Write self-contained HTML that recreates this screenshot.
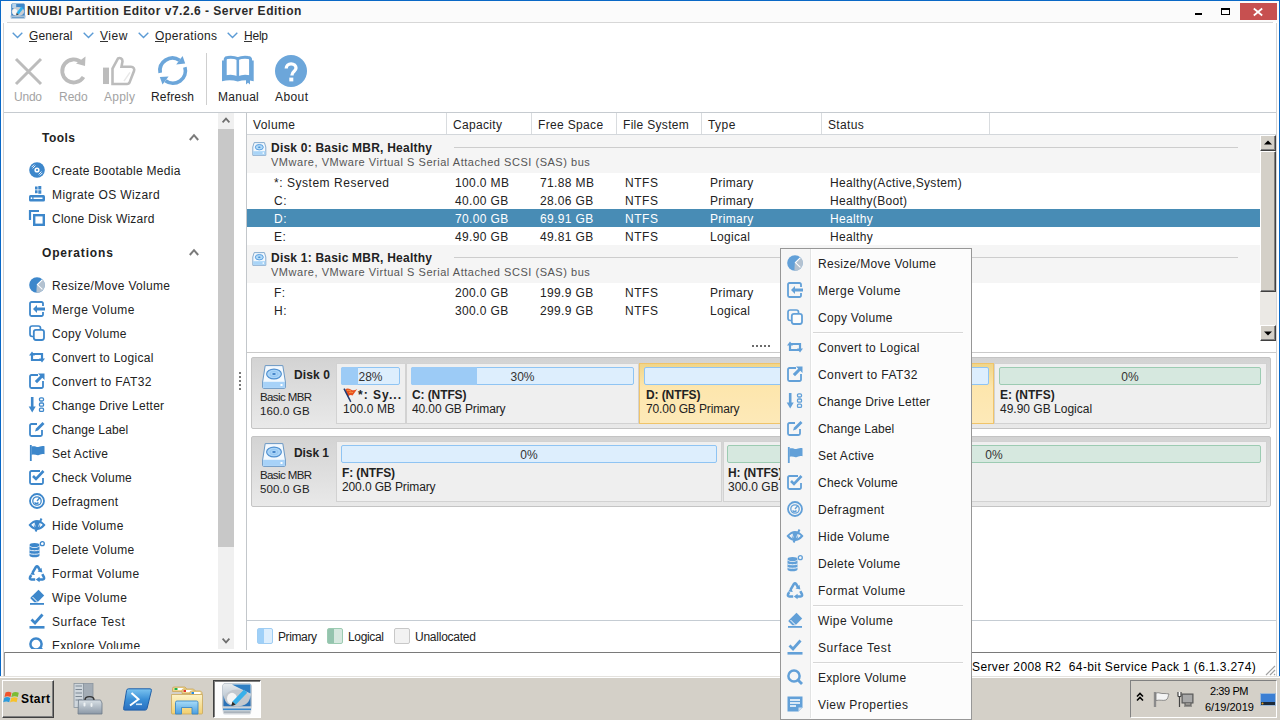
<!DOCTYPE html>
<html><head><meta charset="utf-8"><style>html,body{margin:0;padding:0;width:1280px;height:720px;overflow:hidden;background:#fff;position:relative}
.t{position:absolute;white-space:pre;line-height:1;font-family:"Liberation Sans",sans-serif}
svg{position:absolute;overflow:visible}
.clip{position:absolute;overflow:hidden}
</style></head><body>
<div style="position:absolute;left:0px;top:0px;width:1280px;height:720px;background:#ffffff;"></div>
<div style="position:absolute;left:1px;top:1px;width:1278px;height:21px;background:#fbfbfb;"></div>
<div style="position:absolute;left:0px;top:0px;width:1280px;height:1px;background:#0a68c6;"></div>
<div style="position:absolute;left:0px;top:0px;width:1px;height:676px;background:#0a68c6;"></div>
<div style="position:absolute;left:1279px;top:0px;width:1px;height:676px;background:#0a68c6;"></div>
<div style="position:absolute;left:7px;top:22px;width:1266px;height:1px;background:#d7d7d7;"></div>
<div style="position:absolute;left:3px;top:23px;width:1px;height:653px;background:#d4d4d4;"></div>
<div style="position:absolute;left:1276px;top:23px;width:1px;height:653px;background:#d4d4d4;"></div>
<svg style="left:10px;top:3px" width="16" height="16" viewBox="0 0 16 16"><path d="M2 0.5h12l0.8 1v11.5H1.2V1.5z" fill="#3f86c8"/><path d="M2.2 1h4v4h-4z" fill="#b9d3ea"/><ellipse cx="8" cy="8.6" rx="6.2" ry="4.6" fill="#c9cdd3"/><ellipse cx="4.8" cy="9" rx="2.5" ry="2.9" fill="#f6f6f6"/><path d="M6.6 9.8L11.4 3.6 13.4 5.4 8.6 11.4z" fill="#2cb0ee"/><path d="M6.6 9.8L8.6 11.4 6.2 12.4z" fill="#3a3a3a"/><path d="M0.3 12.6h15.4l-0.6 3.2H0.9z" fill="#a6c0d8"/><rect x="2" y="14" width="12" height="1" fill="#6d9ec9"/></svg>
<div class="t" style="left:27px;top:5px;font-size:12px;font-weight:700;color:#2b2b2b;letter-spacing:0.51px;">NIUBI Partition Editor v7.2.6 - Server Edition</div>
<div style="position:absolute;left:1195px;top:13px;width:7px;height:2px;background:#000;"></div>
<div style="position:absolute;left:1221px;top:8px;width:7px;height:4px;border:1px solid #000;border-top-width:2px"></div>
<div style="position:absolute;left:1240px;top:3px;width:37px;height:17px;background:#c75050;"></div>
<svg style="left:1253px;top:8px" width="10" height="8" viewBox="0 0 10 8"><path d="M0.8 0.5L9.2 7.5M9.2 0.5L0.8 7.5" stroke="#fff" stroke-width="1.7"/></svg>
<svg style="left:12px;top:32px" width="11" height="7" viewBox="0 0 11 7"><path d="M0.7 0.7L5.5 5.5 10.3 0.7" fill="none" stroke="#5b9bd5" stroke-width="1.4"/></svg>
<div class="t" style="left:29px;top:30px;font-size:12px;color:#222;letter-spacing:0.13px;">General</div>
<svg style="left:83px;top:32px" width="11" height="7" viewBox="0 0 11 7"><path d="M0.7 0.7L5.5 5.5 10.3 0.7" fill="none" stroke="#5b9bd5" stroke-width="1.4"/></svg>
<div class="t" style="left:100px;top:30px;font-size:12px;color:#222;letter-spacing:0.57px;">View</div>
<svg style="left:138px;top:32px" width="11" height="7" viewBox="0 0 11 7"><path d="M0.7 0.7L5.5 5.5 10.3 0.7" fill="none" stroke="#5b9bd5" stroke-width="1.4"/></svg>
<div class="t" style="left:155px;top:30px;font-size:12px;color:#222;letter-spacing:0.37px;">Operations</div>
<svg style="left:227px;top:32px" width="11" height="7" viewBox="0 0 11 7"><path d="M0.7 0.7L5.5 5.5 10.3 0.7" fill="none" stroke="#5b9bd5" stroke-width="1.4"/></svg>
<div class="t" style="left:244px;top:30px;font-size:12px;color:#222;letter-spacing:-0.23px;">Help</div>
<div style="position:absolute;left:29px;top:41px;width:8px;height:1px;background:#333;"></div>
<div style="position:absolute;left:100px;top:41px;width:8px;height:1px;background:#333;"></div>
<div style="position:absolute;left:155px;top:41px;width:9px;height:1px;background:#333;"></div>
<div style="position:absolute;left:244px;top:41px;width:8px;height:1px;background:#333;"></div>
<svg style="left:14px;top:57px" width="30" height="30" viewBox="0 0 30 30"><path d="M2 2L27 27M27 2L2 27" stroke="#bcbcbc" stroke-width="3"/></svg>
<svg style="left:59px;top:55px" width="28" height="30" viewBox="0 0 28 30"><path d="M22.5 7.5A11.5 11.5 0 1 0 24.5 22" fill="none" stroke="#bcbcbc" stroke-width="3.8"/><path d="M17 8.5L26.5 1.5 26 11z" fill="#bcbcbc"/></svg>
<svg style="left:103px;top:56px" width="33" height="29" viewBox="0 0 33 30" preserveAspectRatio="none"><rect x="0" y="12" width="6" height="17" fill="#bcbcbc"/><path d="M9.5 13L15 2.5c2-1 4.5 0 4.5 3L18.5 11H28c2.5 0 3.8 2.5 3 4.5L26.5 27.5c-0.5 1-1.2 1.5-2.3 1.5H9.5z" fill="none" stroke="#bcbcbc" stroke-width="2.6"/><path d="M21 26L27 17" stroke="#e8e8e8" stroke-width="1.5"/></svg>
<svg style="left:154px;top:52px" width="40" height="38" viewBox="0 0 40 38"><path d="M6.19 20.9A12.5 12.5 0 0 1 25.5 8.2" fill="none" stroke="#6ca6da" stroke-width="3.7"/><path d="M22.2 12.6L31.2 11.6 28.6 4z" fill="#6ca6da"/><path d="M30.9 15.2A12.5 12.5 0 0 1 11.5 28.8" fill="none" stroke="#6ca6da" stroke-width="3.7"/><path d="M5.8 25.1L14.6 24.6 8.5 32.6z" fill="#6ca6da"/></svg>
<div style="position:absolute;left:206px;top:53px;width:1px;height:52px;background:#cfcfcf;"></div>
<svg style="left:218px;top:52px" width="40" height="38" viewBox="0 0 40 38"><path d="M7.2 25V7.8Q7.2 5.6 9.5 5.4Q15.5 4.6 19.8 6.6Q24.3 4.6 30.3 5.4Q32.6 5.6 32.6 7.8V25" fill="none" stroke="#6ca6da" stroke-width="3"/><path d="M19.8 6.5V26" stroke="#6ca6da" stroke-width="2.6"/><path d="M4 8.5h3.5v14.8Q14 21.6 19.8 24.2Q25.6 21.6 32.2 23.3V8.5h3.5V29.2Q27 27 19.8 29.6Q12.6 27 4 29.2z" fill="#6ca6da"/><path d="M28 27.5h4v5l-2-1.8-2 1.8z" fill="#6ca6da"/></svg>
<svg style="left:275px;top:55px" width="32" height="32" viewBox="0 0 32 32"><circle cx="16" cy="16" r="16" fill="#6ca6da"/><path d="M11.2 13.6c0-2.9 2.1-4.8 4.9-4.8s4.9 1.9 4.9 4.3c0 3.4-4 3.6-4 6.8v0.6" fill="none" stroke="#fff" stroke-width="3.3"/><rect x="14.3" y="22.6" width="4" height="3.8" fill="#fff"/></svg>
<div class="t" style="left:14px;top:91px;font-size:12px;color:#a3a3a3;letter-spacing:-0.23px;">Undo</div>
<div class="t" style="left:59px;top:91px;font-size:12px;color:#a3a3a3;">Redo</div>
<div class="t" style="left:104px;top:91px;font-size:12px;color:#a3a3a3;letter-spacing:0.24px;">Apply</div>
<div class="t" style="left:151px;top:91px;font-size:12px;color:#222;letter-spacing:0.16px;">Refresh</div>
<div class="t" style="left:218px;top:91px;font-size:12px;color:#222;letter-spacing:0.28px;">Manual</div>
<div class="t" style="left:275px;top:91px;font-size:12px;color:#222;letter-spacing:0.41px;">About</div>
<div style="position:absolute;left:4px;top:112px;width:1272px;height:1px;background:#c6cbd0;"></div>
<div class="clip" style="left:4px;top:113px;width:214px;height:536px">
<div class="t" style="left:38px;top:19px;font-size:12px;font-weight:700;color:#222;letter-spacing:0.47px;">Tools</div>
<svg style="left:185px;top:20px" width="10" height="8" viewBox="0 0 10 8"><path d="M0.8 7L5 2.2 9.2 7" fill="none" stroke="#7a7a7a" stroke-width="2"/></svg>
<div class="t" style="left:38px;top:134px;font-size:12px;font-weight:700;color:#222;letter-spacing:0.83px;">Operations</div>
<svg style="left:185px;top:135px" width="10" height="8" viewBox="0 0 10 8"><path d="M0.8 7L5 2.2 9.2 7" fill="none" stroke="#7a7a7a" stroke-width="2"/></svg>
<svg style="left:25px;top:49px" width="16" height="16" viewBox="0 0 16 16"><circle cx="8" cy="8" r="7.8" fill="#3d87cb"/><circle cx="8" cy="8" r="2.6" fill="#fff"/><circle cx="8" cy="8" r="1.1" fill="#3d87cb"/><path d="M2.6 5.2L5.2 2.6M3.6 6.4L6.4 3.6M13.4 10.8L10.8 13.4M12.4 9.6L9.6 12.4" stroke="#fff" stroke-width="0.9"/></svg>
<div class="t" style="left:48px;top:52px;font-size:12px;color:#222;letter-spacing:0.28px;">Create Bootable Media</div>
<svg style="left:25px;top:73px" width="16" height="16" viewBox="0 0 16 16"><path d="M6 0.5h2.6v3h-2.6zM9.3 0h3v3.5h-3zM6 4.2h2.6v3h-2.6zM9.3 4.2h3v3.5h-3z" fill="#3d87cb"/><rect x="0" y="9" width="16" height="6.5" rx="1.5" fill="#3d87cb"/><rect x="4.5" y="11.5" width="9" height="1.5" fill="#fff"/><circle cx="2.5" cy="12.2" r="0.9" fill="#fff"/></svg>
<div class="t" style="left:48px;top:76px;font-size:12px;color:#222;letter-spacing:0.39px;">Migrate OS Wizard</div>
<svg style="left:25px;top:97px" width="16" height="16" viewBox="0 0 16 16"><path d="M1 10V1h9" fill="none" stroke="#3d87cb" stroke-width="2.2"/><rect x="5.2" y="5.2" width="9.6" height="9.6" fill="none" stroke="#3d87cb" stroke-width="2.4"/></svg>
<div class="t" style="left:48px;top:100px;font-size:12px;color:#222;letter-spacing:0.23px;">Clone Disk Wizard</div>
<svg style="left:25px;top:164px" width="16" height="16" viewBox="0 0 16 16"><circle cx="8" cy="8" r="7.8" fill="#3d87cb"/><path d="M7.8 7.8L13.6 2.6A7.8 7.8 0 0 1 7.4 15.8Z" fill="#b4c2d0"/><path d="M13.4 2.6L8.4 7.6 13.4 12.4" fill="none" stroke="#fff" stroke-width="1.1"/></svg>
<div class="t" style="left:48px;top:167px;font-size:12px;color:#222;letter-spacing:0.31px;">Resize/Move Volume</div>
<svg style="left:25px;top:188px" width="16" height="16" viewBox="0 0 16 16"><path d="M14 5V2.5a1.5 1.5 0 0 0-1.5-1.5h-10A1.5 1.5 0 0 0 1 2.5v11A1.5 1.5 0 0 0 2.5 15h10a1.5 1.5 0 0 0 1.5-1.5V11" fill="none" stroke="#3d87cb" stroke-width="1.8"/><path d="M4 8l4-4v2.5h8v3H8V12z" fill="#3d87cb"/></svg>
<div class="t" style="left:48px;top:191px;font-size:12px;color:#222;letter-spacing:0.46px;">Merge Volume</div>
<svg style="left:25px;top:212px" width="16" height="16" viewBox="0 0 16 16"><rect x="1" y="1" width="10.5" height="10.5" rx="2.2" fill="none" stroke="#3d87cb" stroke-width="1.7"/><rect x="4.8" y="4.8" width="10.2" height="10.2" rx="2.2" fill="#fcfcfc" stroke="#3d87cb" stroke-width="1.8"/></svg>
<div class="t" style="left:48px;top:215px;font-size:12px;color:#222;letter-spacing:0.30px;">Copy Volume</div>
<svg style="left:25px;top:236px" width="16" height="16" viewBox="0 0 16 16"><path d="M3 5.5v5.5h9.5" fill="none" stroke="#3d87cb" stroke-width="2.2"/><path d="M13 10.5V5H3.5" fill="none" stroke="#3d87cb" stroke-width="2.2"/><path d="M0 6.5l3-4 3 4zM10 9.5l3 4 3-4z" fill="#3d87cb"/></svg>
<div class="t" style="left:48px;top:239px;font-size:12px;color:#222;letter-spacing:0.27px;">Convert to Logical</div>
<svg style="left:25px;top:260px" width="16" height="16" viewBox="0 0 16 16"><path d="M9 2H2.5A1.5 1.5 0 0 0 1 3.5v10A1.5 1.5 0 0 0 2.5 15h10a1.5 1.5 0 0 0 1.5-1.5V8" fill="none" stroke="#3d87cb" stroke-width="1.8"/><path d="M9 0.5h6.5V7L13.3 4.8 8 10.2 5.8 8 11.2 2.7z" fill="#3d87cb"/></svg>
<div class="t" style="left:48px;top:263px;font-size:12px;color:#222;letter-spacing:0.42px;">Convert to FAT32</div>
<svg style="left:25px;top:284px" width="16" height="16" viewBox="0 0 16 16"><path d="M3.2 0v11" stroke="#3d87cb" stroke-width="2.6"/><path d="M-0.3 9.5h7L3.2 15.5z" fill="#3d87cb"/><rect x="10.5" y="0.8" width="4" height="3.2" rx="1.2" fill="none" stroke="#3d87cb" stroke-width="1.3"/><rect x="10.5" y="6" width="4" height="3.2" rx="1" fill="none" stroke="#3d87cb" stroke-width="1.3"/><rect x="10.5" y="11.2" width="4" height="3.2" rx="1" fill="none" stroke="#3d87cb" stroke-width="1.3"/></svg>
<div class="t" style="left:48px;top:287px;font-size:12px;color:#222;letter-spacing:0.26px;">Change Drive Letter</div>
<svg style="left:25px;top:308px" width="16" height="16" viewBox="0 0 16 16"><path d="M8 3H2.5A1.5 1.5 0 0 0 1 4.5v9A1.5 1.5 0 0 0 2.5 15h9a1.5 1.5 0 0 0 1.5-1.5V9" fill="none" stroke="#3d87cb" stroke-width="1.8"/><path d="M6 10.5l1-3L13.5 1 15.5 3 9 9.5z" fill="#3d87cb"/></svg>
<div class="t" style="left:48px;top:311px;font-size:12px;color:#222;letter-spacing:0.14px;">Change Label</div>
<svg style="left:25px;top:332px" width="16" height="16" viewBox="0 0 16 16"><path d="M1.8 0v16" stroke="#3d87cb" stroke-width="1.8"/><path d="M2.5 1.5c3-1.2 5 1 7.5 0.2s4-0.8 5.5-0.5v8c-1.5-0.3-3 0-5.5 0.8s-4.5-1.2-7.5 0z" fill="#3d87cb"/></svg>
<div class="t" style="left:48px;top:335px;font-size:12px;color:#222;letter-spacing:0.29px;">Set Active</div>
<svg style="left:25px;top:356px" width="16" height="16" viewBox="0 0 16 16"><path d="M11 2H2.5A1.5 1.5 0 0 0 1 3.5v10A1.5 1.5 0 0 0 2.5 15h10a1.5 1.5 0 0 0 1.5-1.5V9" fill="none" stroke="#3d87cb" stroke-width="1.8"/><path d="M4 7l3 3 7.5-8" fill="none" stroke="#3d87cb" stroke-width="2.6"/></svg>
<div class="t" style="left:48px;top:359px;font-size:12px;color:#222;letter-spacing:0.22px;">Check Volume</div>
<svg style="left:25px;top:380px" width="16" height="16" viewBox="0 0 16 16"><circle cx="8" cy="8" r="7" fill="none" stroke="#3d87cb" stroke-width="1.8"/><circle cx="8" cy="8" r="4.2" fill="none" stroke="#3d87cb" stroke-width="1.3"/><path d="M8 8L11 4.5M5.5 9.5a2.5 2.5 0 0 0 4 0" fill="none" stroke="#3d87cb" stroke-width="1.3"/></svg>
<div class="t" style="left:48px;top:383px;font-size:12px;color:#222;letter-spacing:0.38px;">Defragment</div>
<svg style="left:25px;top:404px" width="16" height="16" viewBox="0 0 16 16"><path d="M0.8 8Q8 0 15.2 8Q8 16 0.8 8z" fill="none" stroke="#3d87cb" stroke-width="1.9"/><ellipse cx="8" cy="8" rx="3.2" ry="3.4" fill="#3d87cb"/><path d="M12.5 1.5L6.6 14.5" stroke="#3d87cb" stroke-width="2"/><path d="M5.2 6L6.2 9.5M10.8 6.2L9.6 9.6" stroke="#fff" stroke-width="0.8"/></svg>
<div class="t" style="left:48px;top:407px;font-size:12px;color:#222;letter-spacing:0.33px;">Hide Volume</div>
<svg style="left:25px;top:428px" width="16" height="16" viewBox="0 0 16 16"><ellipse cx="5.5" cy="4" rx="5" ry="2" fill="#3d87cb"/><path d="M0.5 5v9.5c0 1.2 2.2 1.8 5 1.8s5-0.6 5-1.8V5c0 1.2-2.2 1.8-5 1.8S0.5 6.2 0.5 5z" fill="#3d87cb"/><path d="M0.5 9c1.5 1 8.5 1 10 0M0.5 12.5c1.5 1 8.5 1 10 0" fill="none" stroke="#fff" stroke-width="0.9"/><circle cx="13.3" cy="2.7" r="2" fill="none" stroke="#3d87cb" stroke-width="1.3"/></svg>
<div class="t" style="left:48px;top:431px;font-size:12px;color:#222;letter-spacing:0.35px;">Delete Volume</div>
<svg style="left:25px;top:452px" width="16" height="16" viewBox="0 0 16 16"><path d="M3.6 7.6L7 1.8Q8 0.6 9 1.8L10.9 5.2M13.3 9.2L15 12.3Q15.6 14.3 13.6 14.5H9.8M6.2 14.5H2.4Q0.4 14.3 1 12.3L2.2 10.1" fill="none" stroke="#3d87cb" stroke-width="2.5"/><path d="M8.6 6.6L13.4 7.4 12.4 2.8zM10.6 11.8V17.2L6.8 14.5zM1.2 9.4L5.8 10 4 5.6z" fill="#3d87cb"/></svg>
<div class="t" style="left:48px;top:455px;font-size:12px;color:#222;letter-spacing:0.49px;">Format Volume</div>
<svg style="left:25px;top:476px" width="16" height="16" viewBox="0 0 16 16"><path d="M9.5 0.8L15.2 6.5 8.5 13.2H5.3L1.8 9.7a1 1 0 0 1 0-1.4z" fill="#3d87cb"/><path d="M3.5 8L8.5 13" stroke="#fff" stroke-width="1"/><path d="M6 8L11 3" stroke="#fff" stroke-width="0" /><rect x="1" y="14" width="14" height="1.8" fill="#3d87cb"/></svg>
<div class="t" style="left:48px;top:479px;font-size:12px;color:#222;letter-spacing:0.42px;">Wipe Volume</div>
<svg style="left:25px;top:500px" width="16" height="16" viewBox="0 0 16 16"><path d="M2.5 6.5L6 10 13.5 1.5" fill="none" stroke="#3d87cb" stroke-width="2.8"/><rect x="0.5" y="13" width="15" height="2.6" fill="#3d87cb"/></svg>
<div class="t" style="left:48px;top:503px;font-size:12px;color:#222;letter-spacing:0.57px;">Surface Test</div>
<svg style="left:25px;top:524px" width="16" height="16" viewBox="0 0 16 16"><circle cx="7" cy="7" r="5.6" fill="none" stroke="#3d87cb" stroke-width="2.5"/><path d="M10.5 10.5L15 15" stroke="#3d87cb" stroke-width="2.8"/></svg>
<div class="t" style="left:48px;top:527px;font-size:12px;color:#222;letter-spacing:0.31px;">Explore Volume</div>
</div>
<div style="position:absolute;left:218px;top:113px;width:16px;height:16px;background:#f0f0f0;"></div>
<svg style="left:222px;top:117px" width="8" height="6" viewBox="0 0 8 6"><path d="M0.6 5.4L4 1.6 7.4 5.4" fill="none" stroke="#6e6e6e" stroke-width="1.7"/></svg>
<div style="position:absolute;left:218px;top:129px;width:16px;height:418px;background:#c8c8c8;"></div>
<div style="position:absolute;left:218px;top:547px;width:16px;height:102px;background:#f0f0f0;"></div>
<svg style="left:222px;top:638px" width="8" height="6" viewBox="0 0 8 6"><path d="M0.6 0.6L4 4.4 7.4 0.6" fill="none" stroke="#6e6e6e" stroke-width="1.7"/></svg>
<div style="position:absolute;left:239px;top:372px;width:2px;height:2px;background:#7a7a7a;"></div>
<div style="position:absolute;left:239px;top:376px;width:2px;height:2px;background:#7a7a7a;"></div>
<div style="position:absolute;left:239px;top:380px;width:2px;height:2px;background:#7a7a7a;"></div>
<div style="position:absolute;left:239px;top:384px;width:2px;height:2px;background:#7a7a7a;"></div>
<div style="position:absolute;left:239px;top:388px;width:2px;height:2px;background:#7a7a7a;"></div>
<div style="position:absolute;left:246px;top:113px;width:1px;height:537px;background:#c3c7cb;"></div>
<div style="position:absolute;left:247px;top:134px;width:1029px;height:1px;background:#d3d7db;"></div>
<div style="position:absolute;left:446px;top:113px;width:1px;height:21px;background:#d9dcdf;"></div>
<div style="position:absolute;left:531px;top:113px;width:1px;height:21px;background:#d9dcdf;"></div>
<div style="position:absolute;left:616px;top:113px;width:1px;height:21px;background:#d9dcdf;"></div>
<div style="position:absolute;left:701px;top:113px;width:1px;height:21px;background:#d9dcdf;"></div>
<div style="position:absolute;left:821px;top:113px;width:1px;height:21px;background:#d9dcdf;"></div>
<div style="position:absolute;left:989px;top:113px;width:1px;height:21px;background:#d9dcdf;"></div>
<div class="t" style="left:253px;top:119px;font-size:12px;color:#222;letter-spacing:0.40px;">Volume</div>
<div class="t" style="left:453px;top:119px;font-size:12px;color:#222;letter-spacing:0.33px;">Capacity</div>
<div class="t" style="left:538px;top:119px;font-size:12px;color:#222;letter-spacing:0.34px;">Free Space</div>
<div class="t" style="left:623px;top:119px;font-size:12px;color:#222;letter-spacing:0.31px;">File System</div>
<div class="t" style="left:708px;top:119px;font-size:12px;color:#222;letter-spacing:0.43px;">Type</div>
<div class="t" style="left:828px;top:119px;font-size:12px;color:#222;letter-spacing:0.34px;">Status</div>
<div style="position:absolute;left:247px;top:135px;width:1013px;height:38px;background:#f5f5f5;"></div>
<svg style="left:252px;top:142px" width="15" height="14" viewBox="0 0 15 14"><path d="M2.2 0.6h10.2l1.4 4.4v8.3H0.8V5z" fill="#f2f8fd" stroke="#7aa3c8" stroke-width="0.9"/><rect x="1.2" y="9.2" width="12.2" height="3.7" fill="#a9d4f7"/><ellipse cx="7.3" cy="5.2" rx="4" ry="2.7" fill="#b2dbf8" stroke="#5b9fe0" stroke-width="1"/><ellipse cx="7.3" cy="5.2" rx="1.3" ry="0.7" fill="#4a8fd0"/><rect x="10.6" y="10.4" width="1.4" height="1.4" fill="#fff"/></svg>
<div class="t" style="left:271px;top:142px;font-size:12px;font-weight:700;color:#222;letter-spacing:0.22px;">Disk 0: Basic MBR, Healthy</div>
<div style="position:absolute;left:454px;top:147px;width:784px;height:1px;background:#cdcdcd;"></div>
<div class="t" style="left:271px;top:157px;font-size:11px;color:#555;letter-spacing:0.53px;">VMware, VMware Virtual S Serial Attached SCSI (SAS) bus</div>
<div style="position:absolute;left:247px;top:245px;width:1013px;height:38px;background:#f5f5f5;"></div>
<svg style="left:252px;top:252px" width="15" height="14" viewBox="0 0 15 14"><path d="M2.2 0.6h10.2l1.4 4.4v8.3H0.8V5z" fill="#f2f8fd" stroke="#7aa3c8" stroke-width="0.9"/><rect x="1.2" y="9.2" width="12.2" height="3.7" fill="#a9d4f7"/><ellipse cx="7.3" cy="5.2" rx="4" ry="2.7" fill="#b2dbf8" stroke="#5b9fe0" stroke-width="1"/><ellipse cx="7.3" cy="5.2" rx="1.3" ry="0.7" fill="#4a8fd0"/><rect x="10.6" y="10.4" width="1.4" height="1.4" fill="#fff"/></svg>
<div class="t" style="left:271px;top:252px;font-size:12px;font-weight:700;color:#222;letter-spacing:0.22px;">Disk 1: Basic MBR, Healthy</div>
<div style="position:absolute;left:454px;top:257px;width:784px;height:1px;background:#cdcdcd;"></div>
<div class="t" style="left:271px;top:267px;font-size:11px;color:#555;letter-spacing:0.53px;">VMware, VMware Virtual S Serial Attached SCSI (SAS) bus</div>
<div style="position:absolute;left:247px;top:209px;width:1013px;height:18px;background:#488cb5;"></div>
<div class="t" style="left:274px;top:177px;font-size:12px;color:#222;letter-spacing:0.53px;">*: System Reserved</div>
<div class="t" style="left:455px;top:177px;font-size:12px;color:#222;letter-spacing:0.37px;">100.0 MB</div>
<div class="t" style="left:540px;top:177px;font-size:12px;color:#222;letter-spacing:0.37px;">71.88 MB</div>
<div class="t" style="left:625px;top:177px;font-size:12px;color:#222;letter-spacing:0.52px;">NTFS</div>
<div class="t" style="left:710px;top:177px;font-size:12px;color:#222;letter-spacing:0.34px;">Primary</div>
<div class="t" style="left:830px;top:177px;font-size:12px;color:#222;letter-spacing:0.33px;">Healthy(Active,System)</div>
<div class="t" style="left:274px;top:195px;font-size:12px;color:#222;letter-spacing:0.60px;">C:</div>
<div class="t" style="left:455px;top:195px;font-size:12px;color:#222;letter-spacing:0.36px;">40.00 GB</div>
<div class="t" style="left:540px;top:195px;font-size:12px;color:#222;letter-spacing:0.36px;">28.06 GB</div>
<div class="t" style="left:625px;top:195px;font-size:12px;color:#222;letter-spacing:0.52px;">NTFS</div>
<div class="t" style="left:710px;top:195px;font-size:12px;color:#222;letter-spacing:0.34px;">Primary</div>
<div class="t" style="left:830px;top:195px;font-size:12px;color:#222;letter-spacing:0.31px;">Healthy(Boot)</div>
<div class="t" style="left:274px;top:213px;font-size:12px;color:#fff;letter-spacing:0.60px;">D:</div>
<div class="t" style="left:455px;top:213px;font-size:12px;color:#fff;letter-spacing:0.36px;">70.00 GB</div>
<div class="t" style="left:540px;top:213px;font-size:12px;color:#fff;letter-spacing:0.36px;">69.91 GB</div>
<div class="t" style="left:625px;top:213px;font-size:12px;color:#fff;letter-spacing:0.52px;">NTFS</div>
<div class="t" style="left:710px;top:213px;font-size:12px;color:#fff;letter-spacing:0.34px;">Primary</div>
<div class="t" style="left:830px;top:213px;font-size:12px;color:#fff;letter-spacing:0.34px;">Healthy</div>
<div class="t" style="left:274px;top:231px;font-size:12px;color:#222;letter-spacing:0.57px;">E:</div>
<div class="t" style="left:455px;top:231px;font-size:12px;color:#222;letter-spacing:0.36px;">49.90 GB</div>
<div class="t" style="left:540px;top:231px;font-size:12px;color:#222;letter-spacing:0.36px;">49.81 GB</div>
<div class="t" style="left:625px;top:231px;font-size:12px;color:#222;letter-spacing:0.52px;">NTFS</div>
<div class="t" style="left:710px;top:231px;font-size:12px;color:#222;letter-spacing:0.32px;">Logical</div>
<div class="t" style="left:830px;top:231px;font-size:12px;color:#222;letter-spacing:0.34px;">Healthy</div>
<div class="t" style="left:274px;top:287px;font-size:12px;color:#222;letter-spacing:0.53px;">F:</div>
<div class="t" style="left:455px;top:287px;font-size:12px;color:#222;letter-spacing:0.36px;">200.0 GB</div>
<div class="t" style="left:540px;top:287px;font-size:12px;color:#222;letter-spacing:0.36px;">199.9 GB</div>
<div class="t" style="left:625px;top:287px;font-size:12px;color:#222;letter-spacing:0.52px;">NTFS</div>
<div class="t" style="left:710px;top:287px;font-size:12px;color:#222;letter-spacing:0.34px;">Primary</div>
<div class="t" style="left:274px;top:305px;font-size:12px;color:#222;letter-spacing:0.60px;">H:</div>
<div class="t" style="left:455px;top:305px;font-size:12px;color:#222;letter-spacing:0.36px;">300.0 GB</div>
<div class="t" style="left:540px;top:305px;font-size:12px;color:#222;letter-spacing:0.36px;">299.9 GB</div>
<div class="t" style="left:625px;top:305px;font-size:12px;color:#222;letter-spacing:0.52px;">NTFS</div>
<div class="t" style="left:710px;top:305px;font-size:12px;color:#222;letter-spacing:0.32px;">Logical</div>
<div style="position:absolute;left:1260px;top:135px;width:16px;height:206px;background:#ebe9e5;"></div>
<div style="position:absolute;left:1260px;top:135px;width:14px;height:14px;background:#d4d0c8;border:1px solid;border-color:#fff #404040 #404040 #fff;box-shadow:inset -1px -1px #808080, inset 1px 1px #d4d0c8"></div>
<svg style="left:1264px;top:140px" width="8" height="5" viewBox="0 0 8 5"><path d="M0 4.5L4 0.5 8 4.5z" fill="#000"/></svg>
<div style="position:absolute;left:1260px;top:151px;width:14px;height:139px;background:#d4d0c8;border:1px solid;border-color:#fff #404040 #404040 #fff;box-shadow:inset -1px -1px #808080, inset 1px 1px #d4d0c8"></div>
<div style="position:absolute;left:1260px;top:325px;width:14px;height:14px;background:#d4d0c8;border:1px solid;border-color:#fff #404040 #404040 #fff;box-shadow:inset -1px -1px #808080, inset 1px 1px #d4d0c8"></div>
<svg style="left:1264px;top:331px" width="8" height="5" viewBox="0 0 8 5"><path d="M0 0.5L4 4.5 8 0.5z" fill="#000"/></svg>
<div style="position:absolute;left:752px;top:345px;width:2px;height:2px;background:#6b6b6b;"></div>
<div style="position:absolute;left:756px;top:345px;width:2px;height:2px;background:#6b6b6b;"></div>
<div style="position:absolute;left:760px;top:345px;width:2px;height:2px;background:#6b6b6b;"></div>
<div style="position:absolute;left:764px;top:345px;width:2px;height:2px;background:#6b6b6b;"></div>
<div style="position:absolute;left:768px;top:345px;width:2px;height:2px;background:#6b6b6b;"></div>
<div style="position:absolute;left:247px;top:352px;width:1029px;height:1px;background:#cacaca;"></div>
<div style="position:absolute;left:251px;top:357px;width:1018px;height:70px;border:1px solid #c4c4c4;border-radius:2px;background:linear-gradient(#d3d3d3,#e9e9e9)"></div>
<svg style="left:262px;top:365px" width="24" height="24" viewBox="0 0 24 24"><path d="M3.2 0.6H20.8L23.4 17V22.4a1 1 0 0 1-1 1H1.6a1 1 0 0 1-1-1V17z" fill="#f3f9fe" stroke="#6b98c4" stroke-width="1"/><rect x="1.1" y="16.8" width="21.8" height="6.1" fill="#a7d2f8"/><ellipse cx="12" cy="9" rx="7.4" ry="4.9" fill="#a9d4f8" stroke="#4f8fcf" stroke-width="1.1"/><ellipse cx="12" cy="9" rx="4" ry="2.6" fill="none" stroke="#8fc3ef" stroke-width="0.8"/><ellipse cx="12" cy="9" rx="1.8" ry="1" fill="#3f80c6"/><rect x="18.5" y="19" width="2" height="2" fill="#fff"/></svg>
<div class="t" style="left:294px;top:369px;font-size:12px;font-weight:700;color:#222;letter-spacing:0.13px;">Disk 0</div>
<div class="t" style="left:260px;top:392px;font-size:11.5px;color:#222;letter-spacing:-0.61px;">Basic MBR</div>
<div class="t" style="left:260px;top:406px;font-size:11.5px;color:#222;letter-spacing:0.14px;">160.0 GB</div>
<div style="position:absolute;left:336px;top:363px;width:68px;height:59px;border:1px solid #d2d2d2;background:#efefef"></div>
<div style="position:absolute;left:341px;top:367px;width:57px;height:16px;border:1px solid #8fc4f3;border-radius:2px;background:#ddeefd"></div>
<div style="position:absolute;left:341px;top:367px;width:17px;height:18px;border-radius:2px 0 0 2px;background:#9ccbf6"></div>
<div class="t" style="left:0px;top:371px;font-size:12px;color:#333;left:341px;width:59px;text-align:center;">28%</div>
<div style="position:absolute;left:406px;top:363px;width:231px;height:59px;border:1px solid #d2d2d2;background:#efefef"></div>
<div style="position:absolute;left:411px;top:367px;width:221px;height:16px;border:1px solid #8fc4f3;border-radius:2px;background:#ddeefd"></div>
<div style="position:absolute;left:411px;top:367px;width:66px;height:18px;border-radius:2px 0 0 2px;background:#9ccbf6"></div>
<div class="t" style="left:0px;top:371px;font-size:12px;color:#333;left:411px;width:223px;text-align:center;">30%</div>
<div style="position:absolute;left:639px;top:363px;width:353px;height:59px;border:1px solid #f0c46a;background:linear-gradient(#f0d588,#fde6ad 40%,#fde9b8)"></div>
<div style="position:absolute;left:644px;top:367px;width:343px;height:16px;border:1px solid #8fc4f3;border-radius:2px;background:#ddeefd"></div>
<div class="t" style="left:0px;top:371px;font-size:12px;color:#333;left:644px;width:345px;text-align:center;">0%</div>
<div style="position:absolute;left:994px;top:363px;width:271px;height:59px;border:1px solid #d2d2d2;background:#efefef"></div>
<div style="position:absolute;left:999px;top:367px;width:260px;height:16px;border:1px solid #9ccbb2;border-radius:2px;background:#d6e8df"></div>
<div class="t" style="left:0px;top:371px;font-size:12px;color:#333;left:999px;width:262px;text-align:center;">0%</div>
<svg style="left:343px;top:388px" width="16" height="15" viewBox="0 0 16 15"><path d="M2.3 1Q5 -0.4 7.8 1.5T14.2 1L9.6 7.6Q7.6 6.2 5.2 8.2L4.4 8.6z" fill="#e8501e"/><path d="M4 2.5Q6 1.8 8 3M6 4.5Q8 3.8 10 4.6" stroke="#f7a24a" stroke-width="0.8" fill="none"/><path d="M1 0.6L7.8 13.8" stroke="#1f3a70" stroke-width="1.5"/></svg>
<div class="t" style="left:358px;top:389px;font-size:12px;font-weight:700;color:#222;letter-spacing:1.03px;">*: Sy...</div>
<div class="t" style="left:343px;top:403px;font-size:12px;color:#222;letter-spacing:0.09px;">100.0 MB</div>
<div class="t" style="left:412px;top:389px;font-size:12px;font-weight:700;color:#222;letter-spacing:-0.10px;">C: (NTFS)</div>
<div class="t" style="left:412px;top:403px;font-size:12px;color:#222;letter-spacing:-0.12px;">40.00 GB Primary</div>
<div class="t" style="left:646px;top:389px;font-size:12px;font-weight:700;color:#222;letter-spacing:-0.10px;">D: (NTFS)</div>
<div class="t" style="left:646px;top:403px;font-size:12px;color:#222;letter-spacing:-0.12px;">70.00 GB Primary</div>
<div class="t" style="left:1000px;top:389px;font-size:12px;font-weight:700;color:#222;">E: (NTFS)</div>
<div class="t" style="left:1000px;top:403px;font-size:12px;color:#222;">49.90 GB Logical</div>
<div style="position:absolute;left:251px;top:436px;width:1018px;height:69px;border:1px solid #c4c4c4;border-radius:2px;background:linear-gradient(#d3d3d3,#e9e9e9)"></div>
<svg style="left:262px;top:443px" width="24" height="24" viewBox="0 0 24 24"><path d="M3.2 0.6H20.8L23.4 17V22.4a1 1 0 0 1-1 1H1.6a1 1 0 0 1-1-1V17z" fill="#f3f9fe" stroke="#6b98c4" stroke-width="1"/><rect x="1.1" y="16.8" width="21.8" height="6.1" fill="#a7d2f8"/><ellipse cx="12" cy="9" rx="7.4" ry="4.9" fill="#a9d4f8" stroke="#4f8fcf" stroke-width="1.1"/><ellipse cx="12" cy="9" rx="4" ry="2.6" fill="none" stroke="#8fc3ef" stroke-width="0.8"/><ellipse cx="12" cy="9" rx="1.8" ry="1" fill="#3f80c6"/><rect x="18.5" y="19" width="2" height="2" fill="#fff"/></svg>
<div class="t" style="left:294px;top:447px;font-size:12px;font-weight:700;color:#222;letter-spacing:-0.07px;">Disk 1</div>
<div class="t" style="left:260px;top:470px;font-size:11.5px;color:#222;letter-spacing:-0.61px;">Basic MBR</div>
<div class="t" style="left:260px;top:484px;font-size:11.5px;color:#222;letter-spacing:0.14px;">500.0 GB</div>
<div style="position:absolute;left:336px;top:441px;width:384px;height:59px;border:1px solid #d2d2d2;background:#efefef"></div>
<div style="position:absolute;left:341px;top:445px;width:374px;height:16px;border:1px solid #8fc4f3;border-radius:2px;background:#ddeefd"></div>
<div class="t" style="left:0px;top:449px;font-size:12px;color:#333;left:341px;width:376px;text-align:center;">0%</div>
<div style="position:absolute;left:723px;top:441px;width:542px;height:59px;border:1px solid #d2d2d2;background:#efefef"></div>
<div style="position:absolute;left:727px;top:445px;width:532px;height:16px;border:1px solid #9ccbb2;border-radius:2px;background:#d6e8df"></div>
<div class="t" style="left:0px;top:449px;font-size:12px;color:#333;left:727px;width:534px;text-align:center;">0%</div>
<div class="t" style="left:342px;top:467px;font-size:12px;font-weight:700;color:#222;letter-spacing:-0.12px;">F: (NTFS)</div>
<div class="t" style="left:342px;top:481px;font-size:12px;color:#222;letter-spacing:-0.12px;">200.0 GB Primary</div>
<div class="t" style="left:728px;top:467px;font-size:12px;font-weight:700;color:#222;letter-spacing:-0.10px;">H: (NTFS)</div>
<div class="t" style="left:728px;top:481px;font-size:12px;color:#222;">300.0 GB Logical</div>
<div style="position:absolute;left:247px;top:620px;width:1029px;height:1px;background:#c5ccd3;"></div>
<div style="position:absolute;left:257px;top:628px;width:14px;height:14px;border:1px solid #9fcdf3;border-radius:2px;background:linear-gradient(90deg,#9fd0f8 45%,#ddeefd 45%)"></div>
<div style="position:absolute;left:327px;top:628px;width:14px;height:14px;border:1px solid #9ccbb2;border-radius:2px;background:linear-gradient(90deg,#94c4ae 45%,#d6e8df 45%)"></div>
<div style="position:absolute;left:394px;top:628px;width:14px;height:14px;border:1px solid #c8c8c8;border-radius:2px;background:#f2f2f2"></div>
<div class="t" style="left:278px;top:631px;font-size:12px;color:#222;letter-spacing:-0.39px;">Primary</div>
<div class="t" style="left:348px;top:631px;font-size:12px;color:#222;letter-spacing:-0.34px;">Logical</div>
<div class="t" style="left:415px;top:631px;font-size:12px;color:#222;letter-spacing:-0.24px;">Unallocated</div>
<div style="position:absolute;left:4px;top:652px;width:1272px;height:1px;background:#7a7a7a;"></div>
<div style="position:absolute;left:4px;top:652px;width:1px;height:24px;background:#9a9a9a;"></div>
<div class="t" style="left:972px;top:661px;font-size:12px;color:#000;letter-spacing:0.38px;">Server 2008 R2  64-bit Service Pack 1 (6.1.3.274)</div>
<svg style="left:1264px;top:664px" width="12" height="12" viewBox="0 0 12 12"><path d="M11 2L2 11M11 6L6 11M11 10L10 11" stroke="#a0a0a0" stroke-width="1.2"/></svg>
<div style="position:absolute;left:0px;top:676px;width:1280px;height:44px;background:#d4d0c8;"></div>
<div style="position:absolute;left:0px;top:676px;width:1280px;height:1px;background:#e4e2de;"></div>
<div style="position:absolute;left:0px;top:677px;width:1280px;height:1px;background:#ffffff;"></div>
<div style="position:absolute;left:2px;top:680px;width:50px;height:36px;background:#d4d0c8;border:1px solid;border-color:#fff #404040 #404040 #fff;box-shadow:inset -1px -1px #808080"></div>
<svg style="left:4px;top:690px" width="16" height="15" viewBox="0 0 16 15"><path d="M1.5 2.5c2-1 4-1 6 0.2L6.5 7c-2-1-4-1-6 0z" fill="#f0542c"/><path d="M8.3 3c2-1.2 4-1.2 6.5-0.2L13.8 7c-2.2-1-4.5-1-6.5 0.3z" fill="#7cbc33"/><path d="M0.3 7.8c2-1 4-1 6 0.2L5.2 12.2c-2-1-4-1-6 0z" fill="#2b9bdc"/><path d="M7.1 8.2c2-1.2 4-1.2 6.5-0.2l-1 4.3c-2.2-1-4.5-1-6.5 0.3z" fill="#f8c228"/></svg>
<div class="t" style="left:21px;top:693px;font-size:12px;font-weight:700;color:#000;letter-spacing:0.41px;">Start</div>
<svg style="left:73px;top:683px" width="30" height="32" viewBox="0 0 30 32"><defs><linearGradient id="tb" x1="0" y1="0" x2="0" y2="1"><stop offset="0" stop-color="#d8e0e6"/><stop offset="1" stop-color="#8b98a6"/></linearGradient><linearGradient id="ps" x1="0" y1="0" x2="0" y2="1"><stop offset="0" stop-color="#7cc4f0"/><stop offset="0.5" stop-color="#3a8fd6"/><stop offset="1" stop-color="#2a6fc0"/></linearGradient></defs><rect x="1" y="0.5" width="9.5" height="24" fill="#cfd6dc" stroke="#8a949e" stroke-width="0.8"/><rect x="10.5" y="0.5" width="9.5" height="24" fill="#a3acb5" stroke="#8a949e" stroke-width="0.8"/><path d="M2.5 3h6.5M2.5 6.5h6.5M2.5 10h6.5M2.5 13.5h6.5M2.5 17h6.5" stroke="#7d8893" stroke-width="1.2"/><path d="M5.5 17h22l1.5 3v11H5z" fill="url(#tb)" stroke="#6d7a88" stroke-width="0.8"/><path d="M12 17c0-4.5 9-4.5 9 0" fill="none" stroke="#333" stroke-width="1.4"/><rect x="10.5" y="19.5" width="2" height="4" rx="1" fill="#eef2f4"/><rect x="17.5" y="20" width="2" height="4" rx="1" fill="#eef2f4"/></svg>
<svg style="left:123px;top:688px" width="29" height="23" viewBox="0 0 29 23"><path d="M5.5 0.8h21.5a1.5 1.5 0 0 1 1.4 1.9L24 20.6a2 2 0 0 1-1.9 1.5H1.8a1.3 1.3 0 0 1-1.2-1.6L3.6 2.4a2 2 0 0 1 1.9-1.6z" fill="url(#ps)" stroke="#1f5fa8" stroke-width="1"/><path d="M8.5 5l7 6.2-8.5 6.3" fill="none" stroke="#fff" stroke-width="2"/><rect x="13" y="15.5" width="6" height="1.6" fill="#cfe3f5"/></svg>
<svg style="left:171px;top:686px" width="32" height="29" viewBox="0 0 32 29"><defs><linearGradient id="fd" x1="0" y1="0" x2="0" y2="1"><stop offset="0" stop-color="#fdf3c8"/><stop offset="1" stop-color="#f2cf6e"/></linearGradient><linearGradient id="st" x1="0" y1="0" x2="0" y2="1"><stop offset="0" stop-color="#a8dcf8"/><stop offset="1" stop-color="#4a9ee0"/></linearGradient></defs><path d="M1.5 2.5a1.5 1.5 0 0 1 1.5-1.5h11l1.5 1.5v3h-14z" fill="#f0d48a" stroke="#c9a75a" stroke-width="0.8"/><rect x="3.5" y="2" width="9" height="2" fill="#fff"/><rect x="3.5" y="2" width="3" height="2" fill="#22b04a"/><path d="M11 4.5a1.5 1.5 0 0 1 1.5-1.5h10l1.5 1.5v3H11z" fill="#f0d48a" stroke="#c9a75a" stroke-width="0.8"/><rect x="12.5" y="4" width="9" height="2" fill="#fff"/><rect x="12.5" y="4" width="2.5" height="2" fill="#e0342a"/><path d="M19 6.5a1.5 1.5 0 0 1 1.5-1.5h9l1.5 1.5v3H19z" fill="#f0d48a" stroke="#c9a75a" stroke-width="0.8"/><rect x="20.5" y="6" width="9" height="2" fill="#fff"/><rect x="20.5" y="6" width="2.5" height="2" fill="#2a8ae2"/><path d="M0.5 8.5h31v18.5a1 1 0 0 1-1 1h-29a1 1 0 0 1-1-1z" fill="url(#fd)" stroke="#c9a75a" stroke-width="0.8"/><path d="M4.5 16.5a1.5 1.5 0 0 1 1.5-1.5h19.5a1.5 1.5 0 0 1 1.5 1.5v11.5h-6v-6.5h-10.5v6.5h-6z" fill="url(#st)" stroke="#3a88c8" stroke-width="0.9"/></svg>
<div style="position:absolute;left:213px;top:680px;width:46px;height:36px;background:#fdfdfd;border:1px solid;border-color:#404040 #fff #fff #404040;box-shadow:inset 1px 1px #808080"></div>
<svg style="left:221px;top:683px" width="32" height="32" viewBox="0 0 32 32"><defs><linearGradient id="nb" x1="0" y1="0" x2="0" y2="1"><stop offset="0" stop-color="#e8ecef"/><stop offset="1" stop-color="#9fb0c0"/></linearGradient></defs><path d="M3 0.5h26l1.5 2v21H1.5v-21z" fill="url(#nb)" stroke="#b8c2cc" stroke-width="0.8"/><path d="M11 1.5h18.5v9L20 6z" fill="#2f7fc4"/><path d="M2.5 12c1 8 5 11 13.5 11s13-3 13.5-11v11.5h-27z" fill="#2a72b8"/><ellipse cx="16" cy="15" rx="12" ry="8.5" fill="#c3c8ce"/><ellipse cx="11" cy="15.5" rx="5" ry="5.8" fill="#f5f5f5"/><path d="M11.5 18.5L23 6.5l3.2 3.2L14.7 21.7z" fill="#38b0ea"/><path d="M11.5 18.5l3.2 3.2-4.6 1.4z" fill="#2a2a2a"/><path d="M1 23.5h30l-1 6.5a2 2 0 0 1-2 1.5H4a2 2 0 0 1-2-1.5z" fill="#cfd4d9"/><rect x="2" y="25.5" width="28" height="1.6" fill="#3a8ad0"/><rect x="3" y="28.5" width="26" height="1.2" fill="#9aa5b0"/></svg>
<div style="position:absolute;left:1130px;top:680px;width:145px;height:36px;border:1px solid;border-color:#808080 #fff #fff #808080"></div>
<svg style="left:1136px;top:692px" width="8" height="10" viewBox="0 0 8 10"><path d="M1 4.5L4 1.5 7 4.5M1 8.5L4 5.5 7 8.5" fill="none" stroke="#000" stroke-width="1.6"/></svg>
<svg style="left:1153px;top:691px" width="17" height="17" viewBox="0 0 17 17"><path d="M2 1v15" stroke="#555" stroke-width="2.2"/><path d="M2 1v15" stroke="#ddd" stroke-width="0.8"/><path d="M3 2c3-1 5 1 8 0.5 2-0.3 3 0.5 5 0.5-1 2-1 5-3 6-3 1-6-0.5-10 0.5z" fill="#f4f4f4" stroke="#777" stroke-width="0.8"/></svg>
<svg style="left:1176px;top:691px" width="18" height="17" viewBox="0 0 18 17"><rect x="6" y="3" width="11" height="9" fill="#8a8a8a" stroke="#555" stroke-width="1"/><rect x="7" y="4" width="9" height="7" fill="#a8a8a8"/><path d="M9 12v2h6v-2M8 15h8" stroke="#555" stroke-width="1" fill="none"/><path d="M2 1v4c0 1 3 1 3 0V1M3.5 5v11" stroke="#444" stroke-width="1.2" fill="#fff"/></svg>
<div class="t" style="left:1210px;top:686px;font-size:11px;color:#000;letter-spacing:-0.41px;">2:39 PM</div>
<div class="t" style="left:1205px;top:702px;font-size:11px;color:#000;">6/19/2019</div>
<svg style="left:1260px;top:693px" width="16" height="13" viewBox="0 0 16 13"><rect x="0.5" y="0.5" width="15" height="12" fill="#3b7fd4" stroke="#9bb8d8" stroke-width="1"/><rect x="1" y="9" width="14" height="3" fill="#1c2a3a"/><circle cx="2.5" cy="10.5" r="1" fill="#e6a020"/></svg>
<div style="position:absolute;left:780px;top:248px;width:190px;height:470px;border:1px solid #979797;background:#fcfcfc"></div>
<div style="position:absolute;left:781px;top:249px;width:29px;height:470px;background:#f6f6f6;"></div>
<div style="position:absolute;left:810px;top:249px;width:1px;height:469px;background:#e2e3e3;"></div>
<div style="position:absolute;left:811px;top:249px;width:1px;height:469px;background:#ffffff;"></div>
<svg style="left:787px;top:255px" width="16" height="16" viewBox="0 0 16 16"><circle cx="8" cy="8" r="7.8" fill="#62a0d8"/><path d="M7.8 7.8L13.6 2.6A7.8 7.8 0 0 1 7.4 15.8Z" fill="#b4c2d0"/><path d="M13.4 2.6L8.4 7.6 13.4 12.4" fill="none" stroke="#fff" stroke-width="1.1"/></svg>
<div class="t" style="left:818px;top:258px;font-size:12px;color:#222;letter-spacing:0.31px;">Resize/Move Volume</div>
<svg style="left:787px;top:282px" width="16" height="16" viewBox="0 0 16 16"><path d="M14 5V2.5a1.5 1.5 0 0 0-1.5-1.5h-10A1.5 1.5 0 0 0 1 2.5v11A1.5 1.5 0 0 0 2.5 15h10a1.5 1.5 0 0 0 1.5-1.5V11" fill="none" stroke="#62a0d8" stroke-width="1.8"/><path d="M4 8l4-4v2.5h8v3H8V12z" fill="#62a0d8"/></svg>
<div class="t" style="left:818px;top:285px;font-size:12px;color:#222;letter-spacing:0.46px;">Merge Volume</div>
<svg style="left:787px;top:309px" width="16" height="16" viewBox="0 0 16 16"><rect x="1" y="1" width="10.5" height="10.5" rx="2.2" fill="none" stroke="#62a0d8" stroke-width="1.7"/><rect x="4.8" y="4.8" width="10.2" height="10.2" rx="2.2" fill="#fcfcfc" stroke="#62a0d8" stroke-width="1.8"/></svg>
<div class="t" style="left:818px;top:312px;font-size:12px;color:#222;letter-spacing:0.30px;">Copy Volume</div>
<div style="position:absolute;left:813px;top:332px;width:150px;height:1px;background:#d7d7d7;"></div>
<div style="position:absolute;left:813px;top:333px;width:150px;height:1px;background:#ffffff;"></div>
<svg style="left:787px;top:339px" width="16" height="16" viewBox="0 0 16 16"><path d="M3 5.5v5.5h9.5" fill="none" stroke="#62a0d8" stroke-width="2.2"/><path d="M13 10.5V5H3.5" fill="none" stroke="#62a0d8" stroke-width="2.2"/><path d="M0 6.5l3-4 3 4zM10 9.5l3 4 3-4z" fill="#62a0d8"/></svg>
<div class="t" style="left:818px;top:342px;font-size:12px;color:#222;letter-spacing:0.27px;">Convert to Logical</div>
<svg style="left:787px;top:366px" width="16" height="16" viewBox="0 0 16 16"><path d="M9 2H2.5A1.5 1.5 0 0 0 1 3.5v10A1.5 1.5 0 0 0 2.5 15h10a1.5 1.5 0 0 0 1.5-1.5V8" fill="none" stroke="#62a0d8" stroke-width="1.8"/><path d="M9 0.5h6.5V7L13.3 4.8 8 10.2 5.8 8 11.2 2.7z" fill="#62a0d8"/></svg>
<div class="t" style="left:818px;top:369px;font-size:12px;color:#222;letter-spacing:0.42px;">Convert to FAT32</div>
<svg style="left:787px;top:393px" width="16" height="16" viewBox="0 0 16 16"><path d="M3.2 0v11" stroke="#62a0d8" stroke-width="2.6"/><path d="M-0.3 9.5h7L3.2 15.5z" fill="#62a0d8"/><rect x="10.5" y="0.8" width="4" height="3.2" rx="1.2" fill="none" stroke="#62a0d8" stroke-width="1.3"/><rect x="10.5" y="6" width="4" height="3.2" rx="1" fill="none" stroke="#62a0d8" stroke-width="1.3"/><rect x="10.5" y="11.2" width="4" height="3.2" rx="1" fill="none" stroke="#62a0d8" stroke-width="1.3"/></svg>
<div class="t" style="left:818px;top:396px;font-size:12px;color:#222;letter-spacing:0.26px;">Change Drive Letter</div>
<svg style="left:787px;top:420px" width="16" height="16" viewBox="0 0 16 16"><path d="M8 3H2.5A1.5 1.5 0 0 0 1 4.5v9A1.5 1.5 0 0 0 2.5 15h9a1.5 1.5 0 0 0 1.5-1.5V9" fill="none" stroke="#62a0d8" stroke-width="1.8"/><path d="M6 10.5l1-3L13.5 1 15.5 3 9 9.5z" fill="#62a0d8"/></svg>
<div class="t" style="left:818px;top:423px;font-size:12px;color:#222;letter-spacing:0.14px;">Change Label</div>
<svg style="left:787px;top:447px" width="16" height="16" viewBox="0 0 16 16"><path d="M1.8 0v16" stroke="#62a0d8" stroke-width="1.8"/><path d="M2.5 1.5c3-1.2 5 1 7.5 0.2s4-0.8 5.5-0.5v8c-1.5-0.3-3 0-5.5 0.8s-4.5-1.2-7.5 0z" fill="#62a0d8"/></svg>
<div class="t" style="left:818px;top:450px;font-size:12px;color:#222;letter-spacing:0.29px;">Set Active</div>
<svg style="left:787px;top:474px" width="16" height="16" viewBox="0 0 16 16"><path d="M11 2H2.5A1.5 1.5 0 0 0 1 3.5v10A1.5 1.5 0 0 0 2.5 15h10a1.5 1.5 0 0 0 1.5-1.5V9" fill="none" stroke="#62a0d8" stroke-width="1.8"/><path d="M4 7l3 3 7.5-8" fill="none" stroke="#62a0d8" stroke-width="2.6"/></svg>
<div class="t" style="left:818px;top:477px;font-size:12px;color:#222;letter-spacing:0.22px;">Check Volume</div>
<svg style="left:787px;top:501px" width="16" height="16" viewBox="0 0 16 16"><circle cx="8" cy="8" r="7" fill="none" stroke="#62a0d8" stroke-width="1.8"/><circle cx="8" cy="8" r="4.2" fill="none" stroke="#62a0d8" stroke-width="1.3"/><path d="M8 8L11 4.5M5.5 9.5a2.5 2.5 0 0 0 4 0" fill="none" stroke="#62a0d8" stroke-width="1.3"/></svg>
<div class="t" style="left:818px;top:504px;font-size:12px;color:#222;letter-spacing:0.38px;">Defragment</div>
<svg style="left:787px;top:528px" width="16" height="16" viewBox="0 0 16 16"><path d="M0.8 8Q8 0 15.2 8Q8 16 0.8 8z" fill="none" stroke="#62a0d8" stroke-width="1.9"/><ellipse cx="8" cy="8" rx="3.2" ry="3.4" fill="#62a0d8"/><path d="M12.5 1.5L6.6 14.5" stroke="#62a0d8" stroke-width="2"/><path d="M5.2 6L6.2 9.5M10.8 6.2L9.6 9.6" stroke="#fff" stroke-width="0.8"/></svg>
<div class="t" style="left:818px;top:531px;font-size:12px;color:#222;letter-spacing:0.33px;">Hide Volume</div>
<svg style="left:787px;top:555px" width="16" height="16" viewBox="0 0 16 16"><ellipse cx="5.5" cy="4" rx="5" ry="2" fill="#62a0d8"/><path d="M0.5 5v9.5c0 1.2 2.2 1.8 5 1.8s5-0.6 5-1.8V5c0 1.2-2.2 1.8-5 1.8S0.5 6.2 0.5 5z" fill="#62a0d8"/><path d="M0.5 9c1.5 1 8.5 1 10 0M0.5 12.5c1.5 1 8.5 1 10 0" fill="none" stroke="#fff" stroke-width="0.9"/><circle cx="13.3" cy="2.7" r="2" fill="none" stroke="#62a0d8" stroke-width="1.3"/></svg>
<div class="t" style="left:818px;top:558px;font-size:12px;color:#222;letter-spacing:0.35px;">Delete Volume</div>
<svg style="left:787px;top:582px" width="16" height="16" viewBox="0 0 16 16"><path d="M3.6 7.6L7 1.8Q8 0.6 9 1.8L10.9 5.2M13.3 9.2L15 12.3Q15.6 14.3 13.6 14.5H9.8M6.2 14.5H2.4Q0.4 14.3 1 12.3L2.2 10.1" fill="none" stroke="#62a0d8" stroke-width="2.5"/><path d="M8.6 6.6L13.4 7.4 12.4 2.8zM10.6 11.8V17.2L6.8 14.5zM1.2 9.4L5.8 10 4 5.6z" fill="#62a0d8"/></svg>
<div class="t" style="left:818px;top:585px;font-size:12px;color:#222;letter-spacing:0.49px;">Format Volume</div>
<div style="position:absolute;left:813px;top:605px;width:150px;height:1px;background:#d7d7d7;"></div>
<div style="position:absolute;left:813px;top:606px;width:150px;height:1px;background:#ffffff;"></div>
<svg style="left:787px;top:612px" width="16" height="16" viewBox="0 0 16 16"><path d="M9.5 0.8L15.2 6.5 8.5 13.2H5.3L1.8 9.7a1 1 0 0 1 0-1.4z" fill="#62a0d8"/><path d="M3.5 8L8.5 13" stroke="#fff" stroke-width="1"/><path d="M6 8L11 3" stroke="#fff" stroke-width="0" /><rect x="1" y="14" width="14" height="1.8" fill="#62a0d8"/></svg>
<div class="t" style="left:818px;top:615px;font-size:12px;color:#222;letter-spacing:0.42px;">Wipe Volume</div>
<svg style="left:787px;top:639px" width="16" height="16" viewBox="0 0 16 16"><path d="M2.5 6.5L6 10 13.5 1.5" fill="none" stroke="#62a0d8" stroke-width="2.8"/><rect x="0.5" y="13" width="15" height="2.6" fill="#62a0d8"/></svg>
<div class="t" style="left:818px;top:642px;font-size:12px;color:#222;letter-spacing:0.57px;">Surface Test</div>
<div style="position:absolute;left:813px;top:662px;width:150px;height:1px;background:#d7d7d7;"></div>
<div style="position:absolute;left:813px;top:663px;width:150px;height:1px;background:#ffffff;"></div>
<svg style="left:787px;top:669px" width="16" height="16" viewBox="0 0 16 16"><circle cx="7" cy="7" r="5.6" fill="none" stroke="#62a0d8" stroke-width="2.5"/><path d="M10.5 10.5L15 15" stroke="#62a0d8" stroke-width="2.8"/></svg>
<div class="t" style="left:818px;top:672px;font-size:12px;color:#222;letter-spacing:0.31px;">Explore Volume</div>
<svg style="left:787px;top:696px" width="16" height="16" viewBox="0 0 16 16"><path d="M0.5 0.5h15v11l-4 4h-11z" fill="#62a0d8"/><path d="M3 4h10M3 7h10M3 10h6" stroke="#fff" stroke-width="1.4"/><path d="M15.5 11.5h-4v4" fill="#cfe0f0"/></svg>
<div class="t" style="left:818px;top:699px;font-size:12px;color:#222;letter-spacing:0.44px;">View Properties</div>
</body></html>
